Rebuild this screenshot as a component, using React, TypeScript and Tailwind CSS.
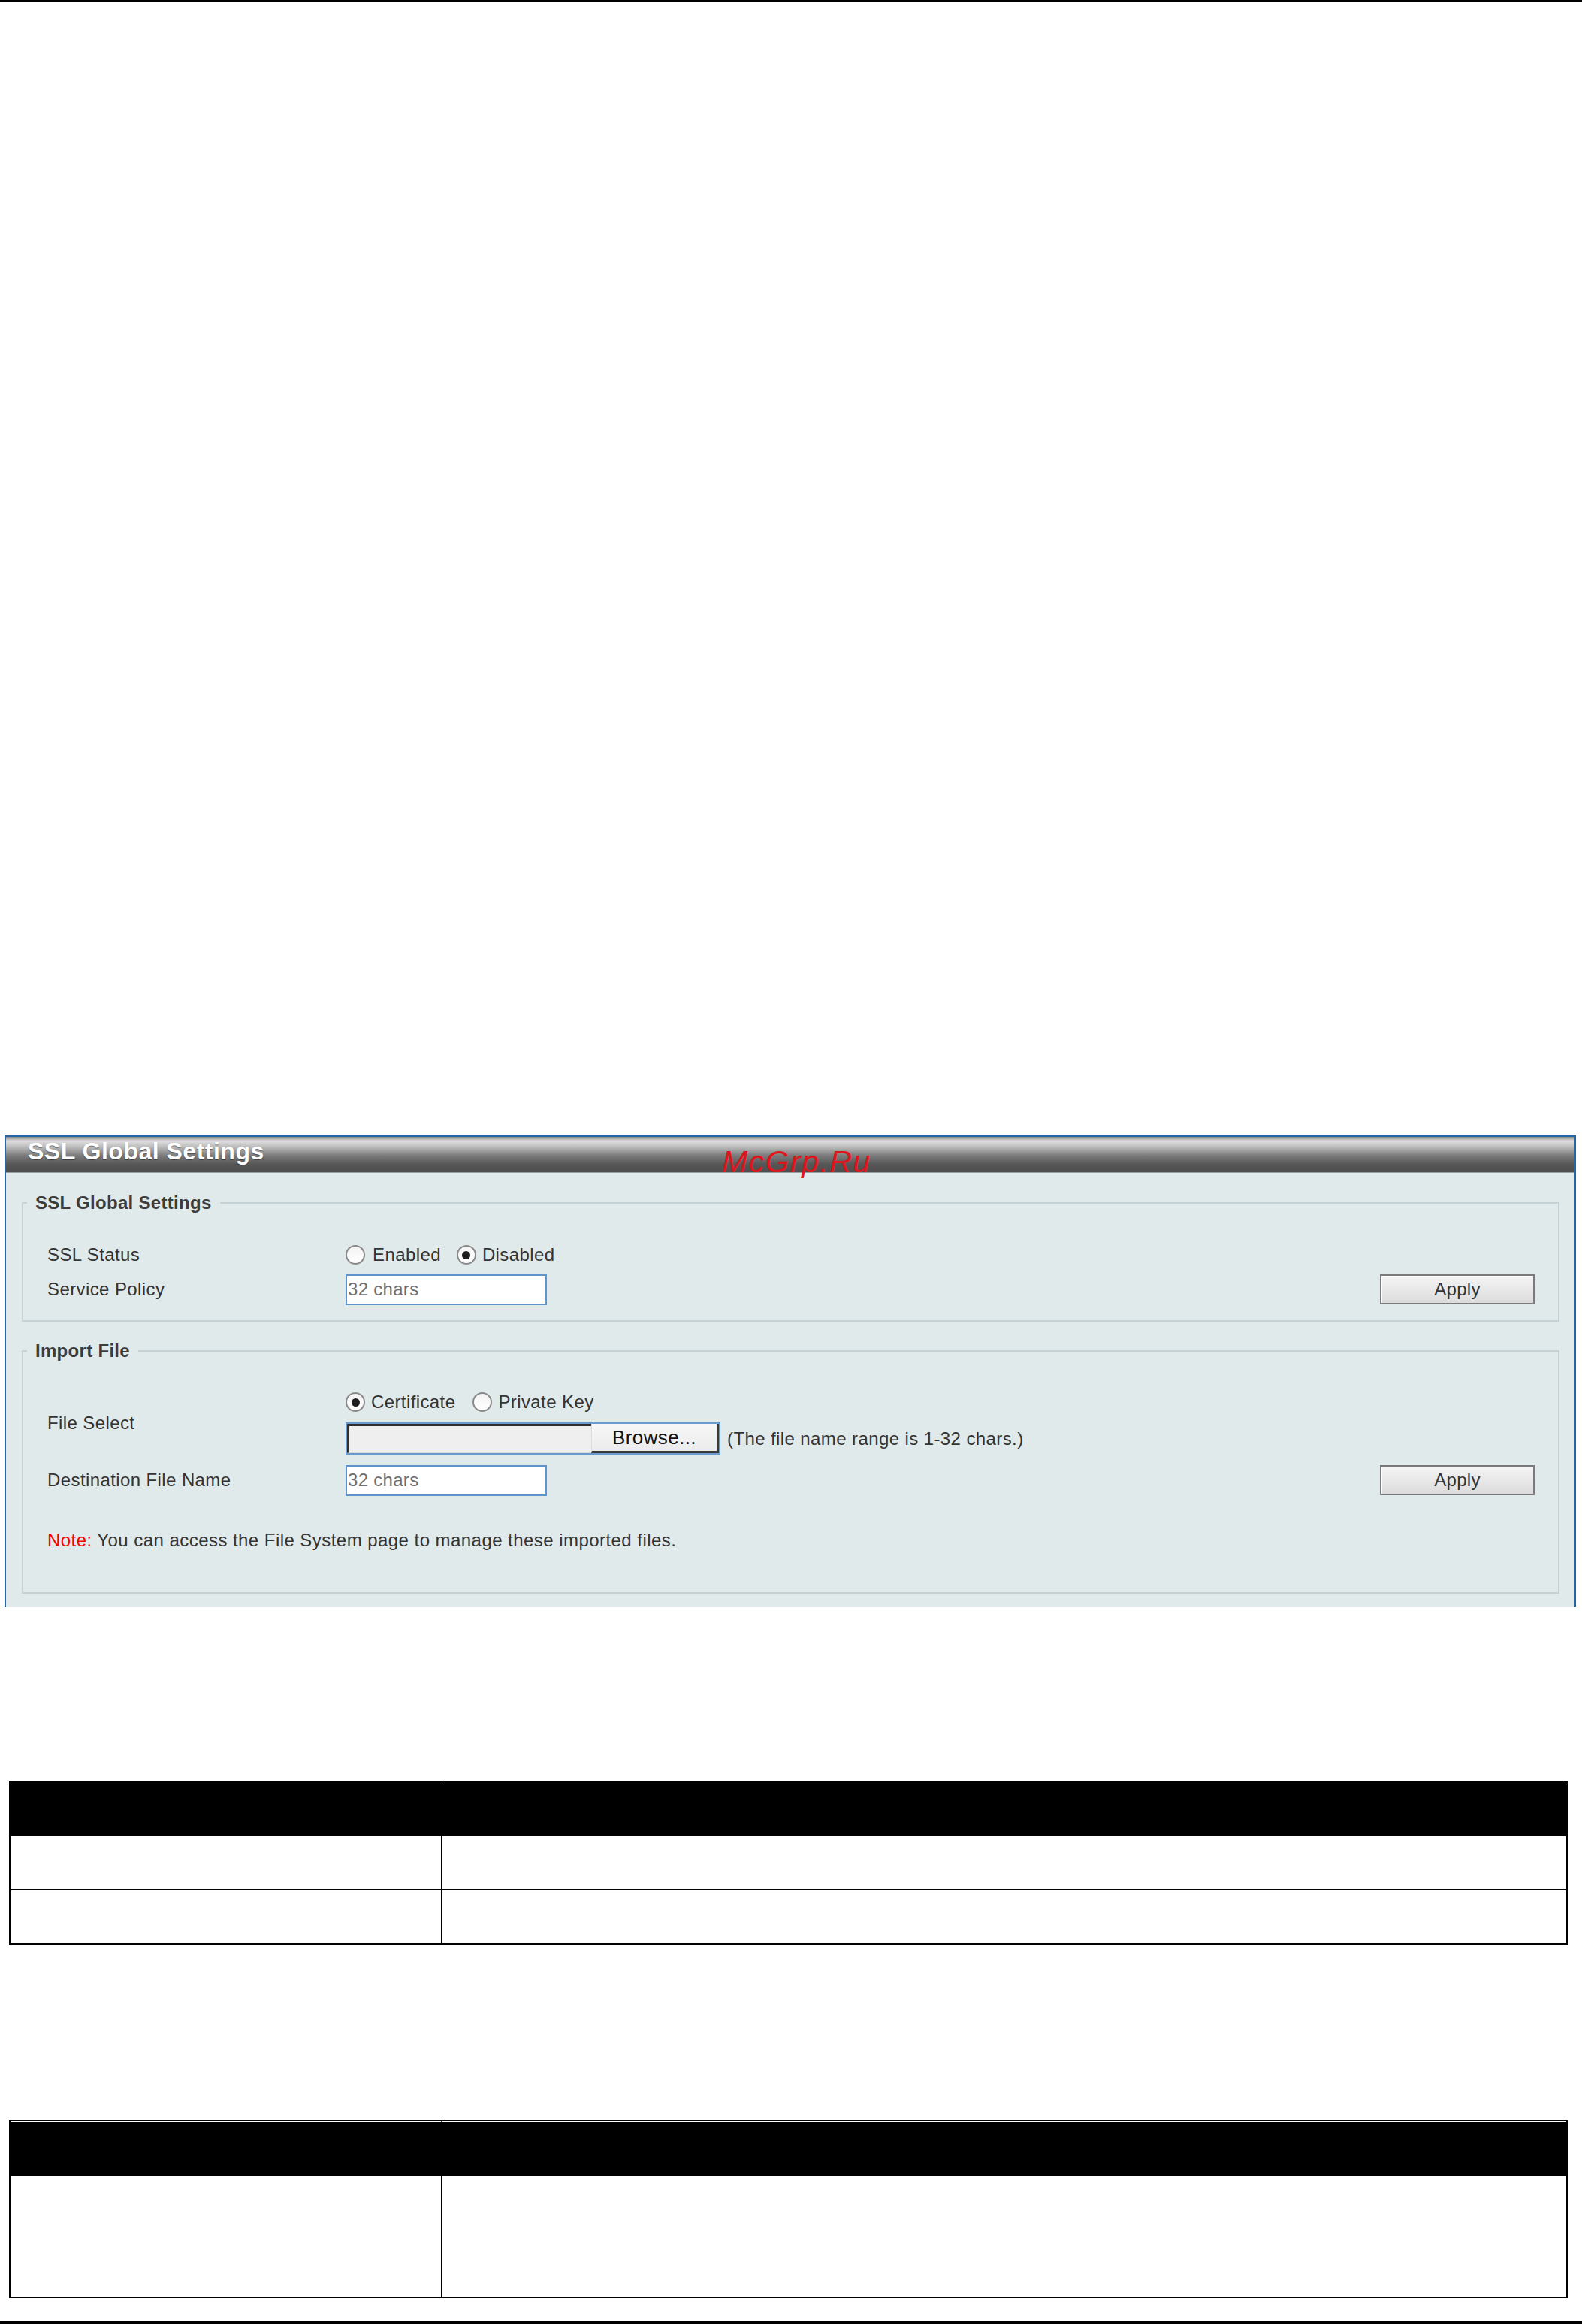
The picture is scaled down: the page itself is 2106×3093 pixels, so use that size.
import React from "react";

const Radio = ({ checked }: { checked?: boolean }) => (
  <span className="flex h-[26px] w-[26px] shrink-0 items-center justify-center rounded-full border-2 border-[#8a8a8a] bg-[linear-gradient(to_bottom,#f4f4f4,#ffffff)]">
    {checked && <span className="h-[11px] w-[11px] rounded-full bg-[#1e1e1e]" />}
  </span>
);

const ApplyBtn = () => (
  <div className="flex h-[40px] w-[206px] shrink-0 items-center justify-center border-2 border-[#7a7a7a] bg-[linear-gradient(to_bottom,#f5f5f5,#dcdcdc)] text-[24px] leading-none tracking-[0.3px] text-[#333] shadow-[inset_1px_1px_0_#ffffff]">
    Apply
  </div>
);

const TextBox = () => (
  <div className="flex h-[41px] w-[268px] shrink-0 items-center border-2 border-[#5f93cb] bg-white pl-[1px] text-[24px] leading-none tracking-[0.3px] text-[#707070]">
    32 chars
  </div>
);

export default function App() {
  return (
    <div className="relative h-[3093px] w-[2106px] overflow-hidden bg-white font-['Liberation_Sans',Arial,sans-serif]">
      <div className="h-[3px] bg-black" />

      {/* Panel */}
      <div className="ml-[6px] mt-[1508px] w-[2092px] border-x-2 border-t-2 border-[#2366a5]">
        <div className="h-[48px] border-b border-[#9aa0a0] bg-[linear-gradient(to_bottom,#8c8c8c_0%,#dedede_12%,#bdbdbd_28%,#7d7d7d_52%,#565656_78%,#4e4e4e_100%)] pl-[29px] pt-[1px]">
          <span className="text-[32px] font-bold leading-[36px] tracking-[0.5px] text-white [text-shadow:0_1px_1px_rgba(0,0,0,0.45)]">
            SSL Global Settings
          </span>
        </div>

        <div className="bg-[#e1eaea] pb-[18px] pt-[26px] tracking-[0.4px]">
          {/* Fieldset 1 */}
          <fieldset className="ml-[21px] mr-[20px] min-w-0 border-2 border-[#c4d2d5] pb-[20px] pr-[31px]">
            <legend className="ml-[5px] px-[11px] text-[24px] font-bold leading-[28px] tracking-[0.3px] text-[#3c3c3c]">
              SSL Global Settings
            </legend>
            <div className="mt-[38px] flex h-[34px] items-center text-[24px] leading-[28px] text-[#333]">
              <div className="w-[429px] shrink-0 pl-[32px]">SSL Status</div>
              <div className="flex items-center">
                <Radio />
                <span className="ml-[10px]">Enabled</span>
                <span className="ml-[21px]" />
                <Radio checked />
                <span className="ml-[8px]">Disabled</span>
              </div>
            </div>
            <div className="mt-[8px] flex h-[42px] items-center text-[24px] leading-[28px] text-[#333]">
              <div className="w-[429px] shrink-0 pl-[32px]">Service Policy</div>
              <TextBox />
              <div className="flex-1" />
              <ApplyBtn />
            </div>
          </fieldset>

          {/* Fieldset 2 */}
          <fieldset className="ml-[21px] mr-[20px] mt-[25px] min-w-0 border-2 border-[#c4d2d5] pb-[55px] pr-[31px]">
            <legend className="ml-[5px] px-[11px] text-[24px] font-bold leading-[28px] tracking-[0.3px] text-[#3c3c3c]">
              Import File
            </legend>
            <div className="mt-[40px] flex items-center text-[24px] leading-[28px] text-[#333]">
              <div className="w-[429px] shrink-0 pl-[32px]">File Select</div>
              <div className="flex flex-col">
                <div className="flex h-[28px] items-center">
                  <Radio checked />
                  <span className="ml-[8px]">Certificate</span>
                  <span className="ml-[23px]" />
                  <Radio />
                  <span className="ml-[8px]">Private Key</span>
                </div>
                <div className="mt-[13px] flex h-[43px] items-center">
                  <div className="flex h-[43px] w-[499px] border-2 border-[#6a9bd0]">
                    <div className="w-[325px] border-l-[3px] border-t-[3px] border-[#2e2e2e] border-b border-b-[#d8d8d8] bg-[#efefef]" />
                    <div className="flex flex-1 items-center justify-center border-b-[3px] border-r-[3px] border-l border-[#3a3a3a] border-l-[#dcdcdc] bg-[linear-gradient(to_bottom,#f7f7f7,#ebebeb)] text-[26px] leading-none text-[#111]">
                      Browse...
                    </div>
                  </div>
                  <span className="ml-[9px]">(The file name range is 1-32 chars.)</span>
                </div>
              </div>
            </div>
            <div className="mt-[13px] flex h-[42px] items-center text-[24px] leading-[28px] text-[#333]">
              <div className="w-[429px] shrink-0 pl-[32px]">Destination File Name</div>
              <TextBox />
              <div className="flex-1" />
              <ApplyBtn />
            </div>
            <div className="mt-[45px] pl-[32px] text-[24px] leading-[28px] tracking-[0.45px] text-[#333]">
              <span className="text-[#ff0000]">Note:</span> You can access the File System page to manage these imported files.
            </div>
          </fieldset>
        </div>
      </div>

      {/* Watermark */}
      <div className="absolute left-[961px] top-[1526px] text-[41px] italic leading-[41px] tracking-[1.5px] text-[#e0141c]">
        McGrp.Ru
      </div>

      {/* Table 1 */}
      <div className="ml-[12px] mt-[231px] w-[2075px] border-x-2 border-b-2 border-t border-black">
        <div className="flex h-[73px]">
          <div className="w-[573px] border-t border-white bg-black" />
          <div className="flex-1 border-l-2 border-t border-black border-t-white bg-black" />
        </div>
        <div className="flex h-[70px]">
          <div className="w-[573px]" />
          <div className="flex-1 border-l-2 border-black" />
        </div>
        <div className="flex h-[72px] border-t-2 border-black">
          <div className="w-[573px]" />
          <div className="flex-1 border-l-2 border-black" />
        </div>
      </div>

      {/* Table 2 */}
      <div className="ml-[12px] mt-[234px] w-[2075px] border-x-2 border-b-2 border-t border-black">
        <div className="flex h-[73px]">
          <div className="w-[573px] border-t border-white bg-black" />
          <div className="flex-1 border-l-2 border-t border-black border-t-white bg-black" />
        </div>
        <div className="flex h-[161px]">
          <div className="w-[573px]" />
          <div className="flex-1 border-l-2 border-black" />
        </div>
      </div>

      <div className="mt-[30px] h-[4px] bg-black" />
    </div>
  );
}
